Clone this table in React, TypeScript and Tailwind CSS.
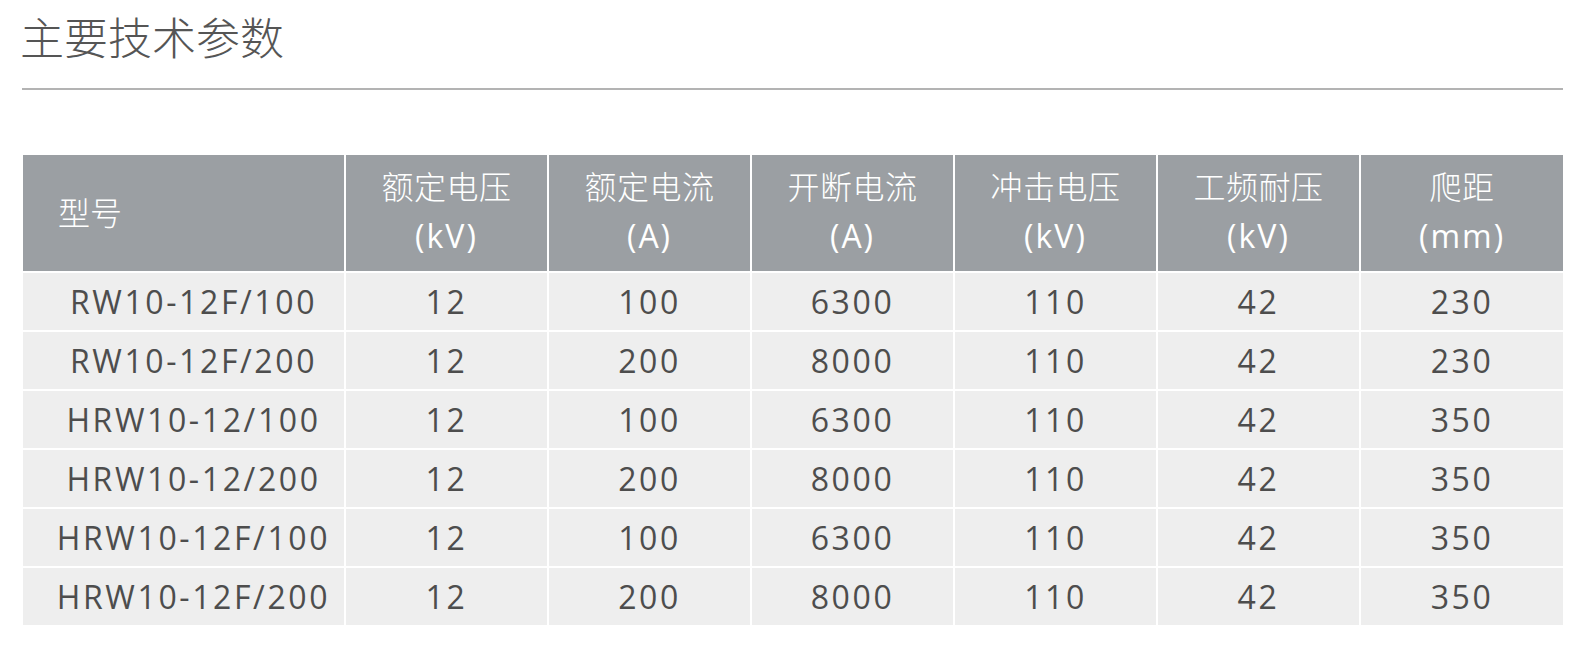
import React from "react";

const headers: { l1: string; l2?: string }[] = [
  { l1: "额定电压", l2: "(kV)" },
  { l1: "额定电流", l2: "(A)" },
  { l1: "开断电流", l2: "(A)" },
  { l1: "冲击电压", l2: "(kV)" },
  { l1: "工频耐压", l2: "(kV)" },
  { l1: "爬距", l2: "(mm)" },
];

const rows: string[][] = [
  ["RW10-12F/100", "12", "100", "6300", "110", "42", "230"],
  ["RW10-12F/200", "12", "200", "8000", "110", "42", "230"],
  ["HRW10-12/100", "12", "100", "6300", "110", "42", "350"],
  ["HRW10-12/200", "12", "200", "8000", "110", "42", "350"],
  ["HRW10-12F/100", "12", "100", "6300", "110", "42", "350"],
  ["HRW10-12F/200", "12", "200", "8000", "110", "42", "350"],
];

const font = { fontFamily: '"Open Sans", "Noto Sans CJK SC", sans-serif' };

export default function App() {
  return (
    <div className="w-[1592px] h-[647px] bg-white overflow-hidden" style={font}>
      <div className="pl-[20px] pt-[5px]">
        <h1 className="text-[44px] leading-[66px] text-[#555555] font-light">主要技术参数</h1>
      </div>
      <div className="ml-[22px] mr-[29px] mt-[17px] h-[2px] bg-[#b3b3b3]" />
      <div className="ml-[23px] mt-[65px] grid grid-cols-[321px_201px_201px_201px_201px_201px_202px] gap-[2px]">
        <div className="h-[116px] bg-[#9b9fa3] flex items-center pl-[35px] text-white text-[32px] font-light">型号</div>
        {headers.map((h, i) => (
          <div key={i} className="h-[116px] bg-[#9b9fa3] flex flex-col items-center justify-center pb-[4px] text-white text-[32px] leading-[49px]">
            <span className="font-light tracking-[0.5px]">{h.l1}</span>
            <span className="tracking-[2px]">{h.l2}</span>
          </div>
        ))}
        {rows.map((r, ri) =>
          r.map((c, ci) => (
            <div
              key={ri + "-" + ci}
              className={
                "h-[57px] bg-[#eeeeee] flex items-center justify-center text-[#4d4d4d] text-[32px] tracking-[2.6px] " +
                (ci === 0 ? "pl-[20px]" : "")
              }
            >
              {c}
            </div>
          ))
        )}
      </div>
    </div>
  );
}
